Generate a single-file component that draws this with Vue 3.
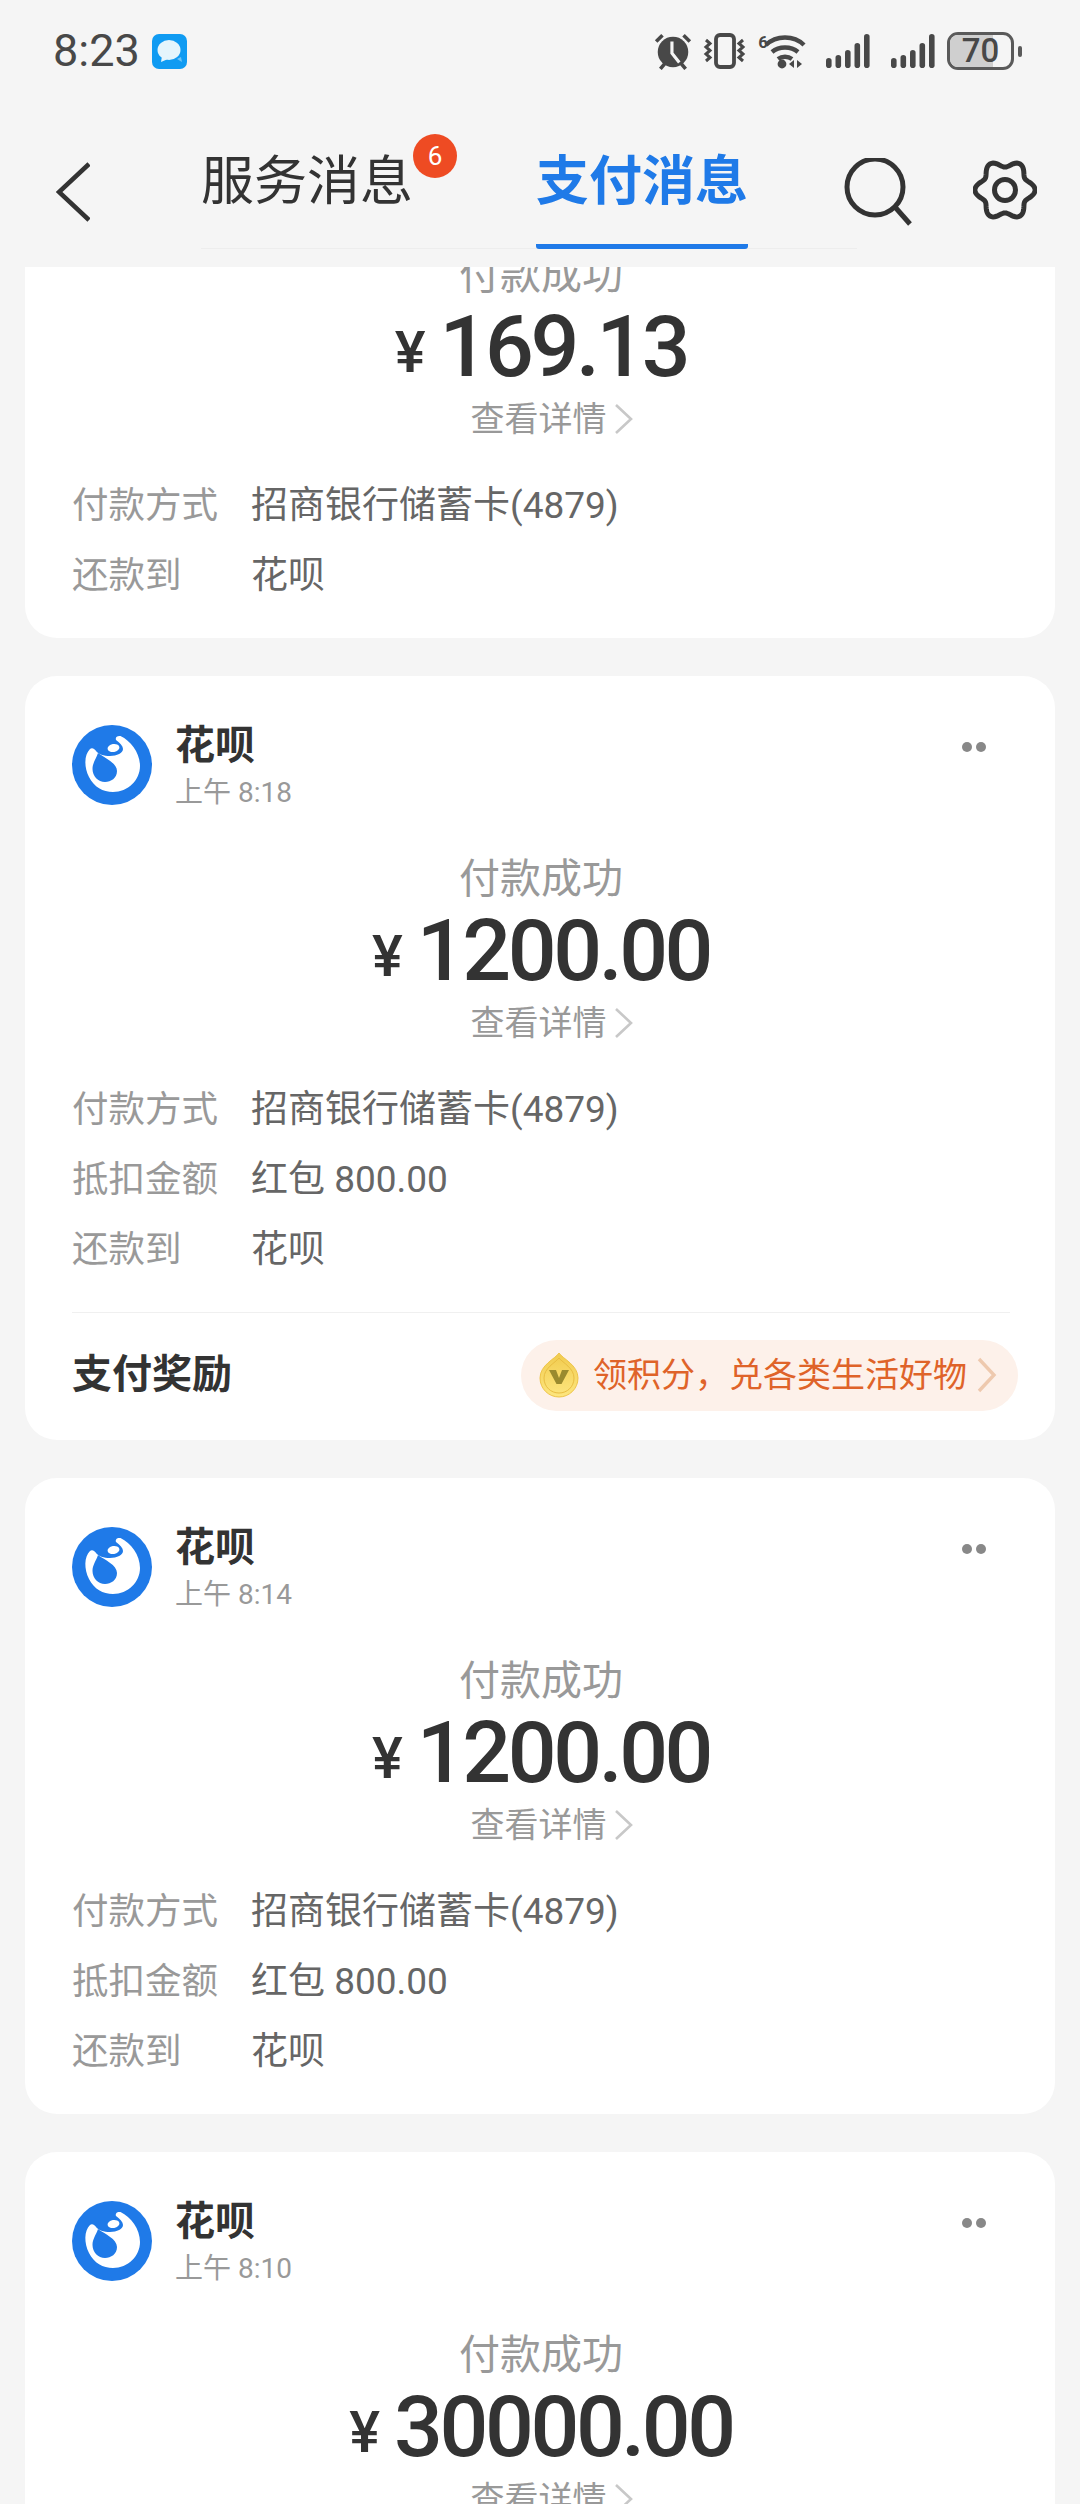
<script setup>
import { computed } from 'vue'

const cards = [
  { id: 1, first: true, amount: '169.13', rows: [['付款方式', '招商银行储蓄卡(4879)'], ['还款到', '花呗']] },
  {
    id: 2,
    time: '上午 8:18',
    amount: '1200.00',
    reward: true,
    rows: [['付款方式', '招商银行储蓄卡(4879)'], ['抵扣金额', '红包 800.00'], ['还款到', '花呗']]
  },
  {
    id: 3,
    time: '上午 8:14',
    amount: '1200.00',
    rows: [['付款方式', '招商银行储蓄卡(4879)'], ['抵扣金额', '红包 800.00'], ['还款到', '花呗']]
  },
  { id: 4, time: '上午 8:10', amount: '30000.00', rows: [] }
]

const signalBars = [
  { x: 0, h: 10 },
  { x: 9.5, h: 13 },
  { x: 19, h: 18 },
  { x: 28.5, h: 25 },
  { x: 38, h: 34 }
]

// six soft lobes round the settings wheel
const gearPath = computed(() => {
  const pts = []
  for (let i = 0; i < 120; i++) {
    const a = (i / 120) * Math.PI * 2
    const r = 26.5 + 3.6 * Math.cos(6 * a)
    pts.push(`${(32 + r * Math.cos(a)).toFixed(2)} ${(32 + r * Math.sin(a)).toFixed(2)}`)
  }
  return `M${pts.join('L')}Z`
})
</script>

<template>
  <div class="page">
    <header class="top">
      <div class="status-bar">
        <div class="status-left">
          <span class="clock">8:23</span>
          <svg class="msg-icon" width="35" height="35" viewBox="0 0 35 35">
            <rect width="35" height="35" rx="7" fill="#109bf2" />
            <path d="M25 25l5 3-1-5z" fill="#6cc4f5" />
            <ellipse cx="17" cy="16" rx="11.5" ry="10" fill="#e4f5fc" />
            <path d="M10 22l-1 6 7-3z" fill="#e4f5fc" />
          </svg>
        </div>
        <div class="status-right">
          <svg class="st-alarm" width="40" height="38" viewBox="0 0 38 36">
            <circle cx="19" cy="19" r="14.5" fill="#484848" />
            <path d="M18 9v11l7 9" fill="none" stroke="#f5f5f5" stroke-width="3" />
            <path d="M3 9l6-6M35 9l-6-6" stroke="#484848" stroke-width="3.4" fill="none" />
            <path d="M7 35l5-6M31 35l-5-6" stroke="#484848" stroke-width="3.4" fill="none" />
          </svg>
          <svg class="st-vibrate" width="44" height="36" viewBox="0 0 44 36">
            <rect x="13" y="2" width="18" height="32" rx="4" fill="none" stroke="#484848" stroke-width="3.8" />
            <path d="M3 7l4 3.5-4 3.5 4 3.5-4 3.5 4 3.5-4 3.5M40 7l-4 3.5 4 3.5-4 3.5 4 3.5-4 3.5 4 3.5" fill="none" stroke="#484848" stroke-width="3" />
          </svg>
          <div class="st-wifi">
            <span class="wifi-six">6</span>
            <svg width="42" height="36" viewBox="0 0 42 36">
              <path d="M2 12C12 2 30 2 40 12M8 19c7-6 19-6 26 0M14 26c4-3 10-3 14 0" fill="none" stroke="#484848" stroke-width="4.4" />
              <circle cx="18" cy="31" r="4.4" fill="#484848" />
              <path d="M30 27v8l-5-4zM33 27v8l5-4z" fill="#484848" />
            </svg>
          </div>
          <svg v-for="n in 2" :key="n" class="st-signal" width="45" height="36" viewBox="0 0 45 36">
            <rect
              v-for="bar in signalBars"
              :key="bar.x"
              :x="bar.x"
              :y="35 - bar.h"
              width="5.6"
              :height="bar.h"
              rx="2.8"
              fill="#484848"
            />
          </svg>
          <div class="battery">
            <div class="battery-body">
              <span class="battery-level"></span>
              <span class="battery-text">70</span>
            </div>
            <span class="battery-nub"></span>
          </div>
        </div>
      </div>

      <nav class="nav">
        <svg class="back" width="34" height="60" viewBox="0 0 34 60">
          <path d="M33 2L3 30l30 28" fill="none" stroke="#333" stroke-width="4.6" />
        </svg>
        <div class="tabs">
          <div class="tab">
            服务消息
            <span class="badge">6</span>
          </div>
          <div class="tab active">支付消息</div>
        </div>
        <svg class="search" width="70" height="68" viewBox="0 0 70 68">
          <circle cx="32" cy="29" r="28" fill="none" stroke="#333" stroke-width="5" />
          <path d="M52 49l15 17" stroke="#333" stroke-width="5" fill="none" />
        </svg>
        <svg class="gear" width="64" height="64" viewBox="0 0 64 64">
          <path :d="gearPath" fill="none" stroke="#333" stroke-width="5" />
          <circle cx="32" cy="32" r="10.5" fill="none" stroke="#333" stroke-width="5" />
        </svg>
      </nav>
    </header>

    <main class="list">
      <section v-for="card in cards" :key="card.id" class="card" :class="{ clipped: card.first }">
        <div v-if="!card.first" class="card-head">
          <svg class="logo" width="80" height="80" viewBox="0 0 80 80">
            <circle cx="40" cy="40" r="40" fill="#1f7ae8" />
            <path
              d="M18 24C12 30 12 42 17 52C22 62 31 67 41 67C56 67 68 55 68 41C68 28 59 16 48.5 11C45.5 10.5 43 12 44 15C48 18 51 21 51 24C51 28 45 31 38 31C32 31 26 29 24 26C23 24 20 22 18 24Z"
              fill="#fff"
            />
            <path d="M26 28C33 33 45 38 45 46C45 53 39 57 33 57C26 57 20.5 51 20.5 44C20.5 38 24 34 26 28Z" fill="#1f7ae8" />
            <ellipse cx="41.5" cy="23" rx="6" ry="4" fill="#fff" transform="rotate(-10 41.5 23)" />
          </svg>
          <div class="head-text">
            <div class="name">花呗</div>
            <div class="time">{{ card.time }}</div>
          </div>
          <div class="more"><i></i><i></i></div>
        </div>

        <div class="pay-status">付款成功</div>
        <div class="amount">
          <span class="yen">¥</span>
          <span class="value">{{ card.amount }}</span>
        </div>
        <div class="detail-link">
          查看详情
          <svg width="20" height="32" viewBox="0 0 20 32">
            <path d="M2 2l15 14L2 30" fill="none" stroke="#c8c8c8" stroke-width="2.6" />
          </svg>
        </div>

        <div class="rows">
          <div v-for="row in card.rows" :key="row[0]" class="row">
            <span class="row-label">{{ row[0] }}</span>
            <span class="row-value">{{ row[1] }}</span>
          </div>
        </div>

        <div v-if="card.reward" class="reward">
          <span class="reward-title">支付奖励</span>
          <div class="reward-pill">
            <svg width="40" height="46" viewBox="0 0 40 46">
              <defs>
                <linearGradient id="coinFill" x1="0" y1="0" x2="0" y2="1">
                  <stop offset="0" stop-color="#f1cb4e" />
                  <stop offset="1" stop-color="#fde67f" />
                </linearGradient>
              </defs>
              <path d="M20 1C24 7 39 13 39 26C39 37 30 45 20 45C10 45 1 37 1 26C1 13 16 7 20 1Z" fill="url(#coinFill)" stroke="#eec44a" stroke-width="1" />
              <path d="M20 6C24 11 35 16 35 26C35 35 28 41 20 41C12 41 5 35 5 26C5 16 16 11 20 6Z" fill="none" stroke="#e9bd42" stroke-width="1" />
              <path d="M10 18h7l3 8 3-8h7l-7.5 14h-5z" fill="#9a8a2e" />
            </svg>
            <span class="reward-text">领积分，兑各类生活好物</span>
            <svg class="reward-arrow" width="22" height="36" viewBox="0 0 22 36">
              <path d="M3 2l15 16L3 34" fill="none" stroke="#eec9ae" stroke-width="3.4" />
            </svg>
          </div>
        </div>
      </section>
    </main>
  </div>
</template>

<style>
html, body {
  margin: 0;
  background: #f5f5f5;
}
</style>

<style scoped>
.page {
  width: 1080px;
  height: 2504px;
  overflow: hidden;
  background: #f5f5f5;
  color: #333;
  font-family: Roboto, "Noto Sans CJK SC", sans-serif;
}

.top {
  position: relative;
  z-index: 2;
  height: 267px;
  background: #f5f5f5;
  box-sizing: border-box;
}

.status-bar {
  height: 102px;
  display: flex;
  align-items: center;
  justify-content: space-between;
  padding: 0 58px 0 53px;
}

.status-left {
  display: flex;
  align-items: center;
  gap: 12px;
}

.clock {
  font-size: 45px;
  line-height: 50px;
  color: #484848;
}

.msg-icon {
  display: block;
}

.status-right {
  display: flex;
  align-items: center;
}

.status-right svg {
  display: block;
}

.st-vibrate {
  margin-left: 10px;
}

.st-wifi {
  display: flex;
  margin-left: 11px;
}

.wifi-six {
  font-size: 17px;
  line-height: 18px;
  font-weight: 700;
  color: #484848;
  margin-right: -4px;
}

.status-right .st-signal {
  margin-left: 20px;
}

.battery {
  display: flex;
  align-items: center;
  margin-left: 11px;
}

.battery-body {
  position: relative;
  width: 67px;
  height: 38px;
  box-sizing: border-box;
  border: 3.5px solid #5a5a5a;
  border-radius: 11px;
  overflow: hidden;
  display: flex;
  align-items: center;
  justify-content: center;
}

.battery-level {
  position: absolute;
  left: 0;
  top: 0;
  bottom: 0;
  width: 70%;
  background: #cfcfcf;
}

.battery-text {
  position: relative;
  font-size: 33px;
  line-height: 30px;
  font-weight: 500;
  color: #484848;
}

.battery-nub {
  width: 4px;
  height: 11px;
  margin-left: 4px;
  border-radius: 2px;
  background: #5a5a5a;
}

.nav {
  position: relative;
  height: 165px;
  display: flex;
  align-items: flex-start;
  padding-left: 56px;
  box-sizing: border-box;
}

.back {
  display: block;
  margin-top: 60px;
  flex: none;
}

.tabs {
  display: flex;
  margin-left: 111px;
  gap: 123px;
  width: 656px;
  box-sizing: border-box;
  flex: none;
  height: 147px;
  border-bottom: 1px solid #ededed;
}

.tab {
  position: relative;
  height: 147px;
  padding-top: 50px;
  box-sizing: border-box;
  font-size: 53px;
  line-height: 60px;
  white-space: nowrap;
  color: #333;
}

.tab.active {
  color: #1f7ae8;
  font-weight: 700;
  border-bottom: 5px solid #1f7ae8;
  border-radius: 0 0 3px 3px;
}

.badge {
  position: absolute;
  right: -44px;
  top: 32px;
  width: 44px;
  height: 44px;
  border-radius: 50%;
  background: #ee4b23;
  color: #fff;
  font-size: 26px;
  line-height: 44px;
  text-align: center;
}

.search {
  display: block;
  flex: none;
  margin: 56px 0 0 -14px;
}

.gear {
  display: block;
  flex: none;
  margin: 56px 0 0 60px;
}

.list {
  display: flex;
  flex-direction: column;
  gap: 38px;
  padding: 0 25px;
}

.card {
  background: #fff;
  border-radius: 32px;
  padding: 49px 45px 0 47px;
  flex: none;
}

.card.clipped {
  margin-top: -196px;
  padding-top: 177px;
}

.card-head {
  display: flex;
  height: 80px;
  position: relative;
  margin-bottom: 47px;
}

.logo {
  display: block;
  flex: none;
}

.head-text {
  margin-left: 23px;
}

.name {
  font-size: 40px;
  line-height: 48px;
  margin-top: -3px;
  font-weight: 700;
  color: #333;
}

.time {
  font-size: 28px;
  line-height: 36px;
  margin-top: 5px;
  color: #999;
}

.more {
  position: absolute;
  right: 24px;
  top: 17px;
  display: flex;
  gap: 4px;
}

.more i {
  display: block;
  width: 10px;
  height: 10px;
  border-radius: 50%;
  background: #888;
}

.pay-status {
  font-size: 41px;
  line-height: 54px;
  text-align: center;
  color: #999;
}

.amount {
  height: 94px;
  display: flex;
  align-items: center;
  justify-content: center;
  gap: 14px;
}

.yen {
  font-size: 58px;
  line-height: 94px;
  font-weight: 500;
  margin-top: 6px;
  color: #333;
}

.value {
  font-size: 86px;
  line-height: 94px;
  font-weight: 500;
  letter-spacing: -3.4px;
  margin-top: -5px;
  color: #333;
}

.detail-link {
  height: 44px;
  margin-top: 1px;
  padding-left: 22px;
  display: flex;
  align-items: center;
  justify-content: center;
  gap: 7px;
  font-size: 34px;
  line-height: 44px;
  color: #999;
}

.detail-link svg {
  display: block;
}

.rows {
  margin-top: 26px;
  padding-bottom: 31px;
}

.row {
  height: 70px;
  display: flex;
  align-items: center;
}

.row-label {
  width: 179px;
  flex: none;
  font-size: 36.5px;
  color: #999;
}

.row-value {
  font-size: 37px;
  color: #666;
}

.reward {
  height: 128px;
  box-sizing: border-box;
  border-top: 1px solid #f0f0f0;
  display: flex;
  align-items: center;
  justify-content: space-between;
  padding-bottom: 3px;
}

.reward-title {
  font-size: 40px;
  line-height: 50px;
  font-weight: 700;
  color: #333;
}

.reward-pill {
  height: 71px;
  margin-right: -8px;
  padding: 0 20px 0 18px;
  box-sizing: border-box;
  display: flex;
  align-items: center;
  gap: 14px;
  background: #fdf1ea;
  border-radius: 36px;
}

.reward-pill svg {
  display: block;
}

.reward-arrow {
  margin-left: -5px;
}

.reward-text {
  font-size: 34px;
  line-height: 44px;
  white-space: nowrap;
  color: #df6329;
}
</style>
